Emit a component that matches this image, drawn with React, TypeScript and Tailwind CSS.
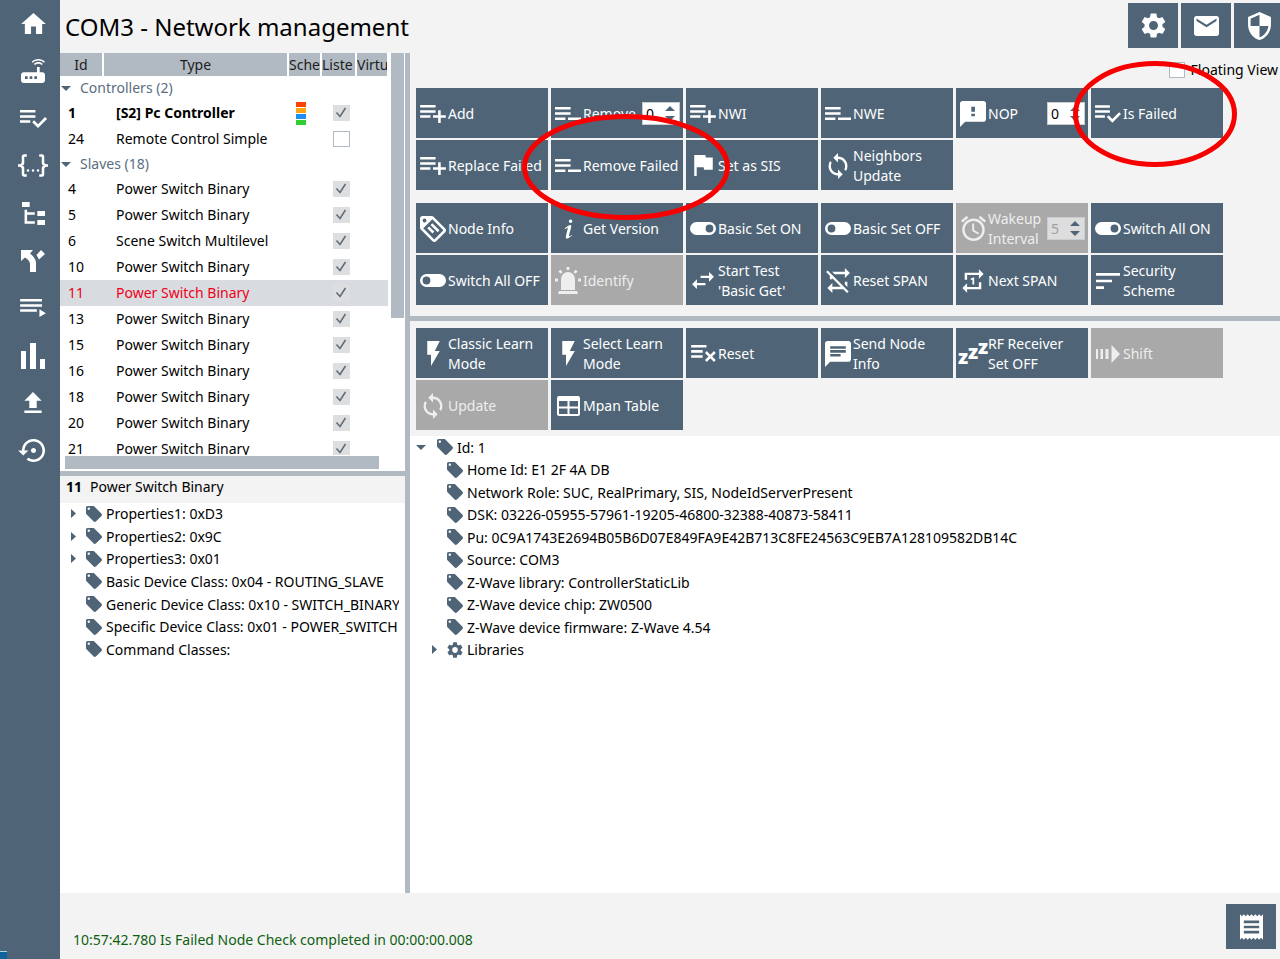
import React from "react";
import clsx from "clsx";
import {
  MdAlarm,
  MdChat,
  MdEmail,
  MdFlag,
  MdFlashOn,
  MdHome,
  MdLocalOffer,
  MdReceipt,
  MdRepeatOne,
  MdRouter,
  MdSecurity,
  MdSettings,
  MdSettingsBackupRestore,
  MdSort,
  MdSync,
} from "react-icons/md";

interface GlyphProps {
  d: string;
  box: string;
  className: string;
}

const Glyph: React.FC<GlyphProps> = ({ d, box, className }) => (
  <svg viewBox={box} className={className} fill="currentColor" aria-hidden="true">
    <path fillRule="evenodd" d={d} />
  </svg>
);

const ListPlus = () => (
  <Glyph
    box="2 6 20 14"
    className="h-[18px] w-[26px]"
    d="M2,16H10V14H2M18,14V10H16V14H12V16H16V20H18V16H22V14M14,6H2V8H14M14,10H2V12H14V10Z"
  />
);
const ListMinus = () => (
  <Glyph
    box="2 6 20 10"
    className="h-[13px] w-[26px]"
    d="M2,16H10V14H2M12,14V16H22V14M14,6H2V8H14M14,10H2V12H14V10Z"
  />
);
const ListCheck = () => (
  <Glyph
    box="2 6 21 14"
    className="h-[18px] w-[27px]"
    d="M14,10H2V12H14V10M14,6H2V8H14V6M2,16H10V14H2V16M21.5,11.5L23,13L16,20L11.5,15.5L13,14L16,17L21.5,11.5Z"
  />
);
const ListRemove = () => (
  <Glyph
    box="2 6 19.3 13.3"
    className="h-[17px] w-[25px]"
    d="M2,6V8H14V6H2M2,10V12H11V10H2M14.17,10.76L12.76,12.17L15.59,15L12.76,17.83L14.17,19.24L17,16.41L19.83,19.24L21.24,17.83L18.41,15L21.24,12.17L19.83,10.76L17,13.59L14.17,10.76M2,14V16H11V14H2Z"
  />
);
const ToggleOn = () => (
  <Glyph
    box="2 7 20 10"
    className="h-[13px] w-[26px]"
    d="M17,7H7A5,5 0 0,0 2,12A5,5 0 0,0 7,17H17A5,5 0 0,0 22,12A5,5 0 0,0 17,7M17,15A3,3 0 0,1 14,12A3,3 0 0,1 17,9A3,3 0 0,1 20,12A3,3 0 0,1 17,15Z"
  />
);
const ToggleOff = () => (
  <Glyph
    box="2 7 20 10"
    className="h-[13px] w-[26px]"
    d="M17,7H7A5,5 0 0,0 2,12A5,5 0 0,0 7,17H17A5,5 0 0,0 22,12A5,5 0 0,0 17,7M7,15A3,3 0 0,1 4,12A3,3 0 0,1 7,9A3,3 0 0,1 10,12A3,3 0 0,1 7,15Z"
  />
);
const TagText = () => (
  <Glyph
    box="2 2 20 20"
    className="h-[26px] w-[26px]"
    d="M5.5,7A1.5,1.5 0 0,0 7,5.5A1.5,1.5 0 0,0 5.5,4A1.5,1.5 0 0,0 4,5.5A1.5,1.5 0 0,0 5.5,7M21.41,11.58C21.77,11.94 22,12.44 22,13C22,13.55 21.78,14.05 21.41,14.41L14.41,21.41C14.05,21.77 13.55,22 13,22C12.45,22 11.95,21.77 11.58,21.41L2.59,12.41C2.22,12.05 2,11.55 2,11V4C2,2.89 2.89,2 4,2H11C11.55,2 12.05,2.22 12.41,2.58L21.41,11.58M13,20L20,13L11.5,4.5L4.5,11.5L13,20M10.09,8.91L11.5,7.5L17,13L15.59,14.41L10.09,8.91M7.59,11.41L9,10L13,14L11.59,15.41L7.59,11.41Z"
  />
);
const InfoMark = () => (
  <Glyph
    box="8 4 7.5 16"
    className="h-5 w-[9px]"
    d="M13.5,4A1.5,1.5 0 0,0 12,5.5A1.5,1.5 0 0,0 13.5,7A1.5,1.5 0 0,0 15,5.5A1.5,1.5 0 0,0 13.5,4M13.14,8.77C11.95,8.87 8.7,11.46 8.7,11.46C8.5,11.61 8.56,11.6 8.72,11.88C8.88,12.15 8.86,12.17 9.05,12.04C9.25,11.91 9.58,11.7 10.13,11.36C12.25,10 10.47,13.14 9.56,18.43C9.2,21.05 11.56,19.7 12.17,19.3C12.77,18.91 14.38,17.8 14.54,17.69C14.76,17.54 14.6,17.42 14.43,17.17C14.31,17 14.19,17.12 14.19,17.12C13.54,17.55 12.35,18.45 12.19,17.88C12,17.31 13.22,13.4 13.89,10.71C14,10.07 14.3,8.67 13.14,8.77Z"
  />
);
const Notice = () => (
  <Glyph
    box="2 2 20 20"
    className="size-[26px]"
    d="M20 2H4C2.9 2 2 2.9 2 4V22L6 18H20C21.1 18 22 17.1 22 16V4C22 2.900 21.1 2 20 2ZM13.500 10.200H10.700V6.500H13.500ZM13.500 13.800H10.700V11.800H13.500Z"
  />
);
const Swap = () => (
  <Glyph
    box="3 5 18 14"
    className="h-[17px] w-[22px]"
    d="M21,9L17,5V8H10V10H17V13M7,11L3,15L7,19V16H14V14H7V11Z"
  />
);
const RepeatOff = () => (
  <Glyph
    box="2 2 19 20"
    className="h-[25px] w-6"
    d="M2,5.27L3.28,4L20,20.72L18.73,22L15.73,19H7V22L3,18L7,14V17H13.73L7,10.27V11H5V8.27L2,5.27M17,13H19V17.18L17,15.18V13M17,5V2L21,6L17,10V7H8.82L6.82,5H17Z"
  />
);
const Siren = () => (
  <svg viewBox="0 0 26 27" className="h-[27px] w-[26px]" fill="currentColor" aria-hidden="true">
    <path d="M6 23V12a7 7 0 0 1 14 0v11zM4 24h18l1 3H3z" />
    <path
      d="M13 0v3M4.500 3.500l2 2.500M21.500 3.500l-2 2.500M0 13h3M23 13h3"
      stroke="currentColor"
      strokeWidth="2.8"
      fill="none"
    />
  </svg>
);
const Snooze = () => (
  <svg viewBox="0 0 32 40" className="h-10 w-8 shrink-0" fill="currentColor" aria-hidden="true">
    <g fontFamily="Noto Sans, sans-serif" fontWeight="900" fontSize="20">
      <text x="1" y="30">z</text>
      <text x="11" y="25">z</text>
      <text x="21" y="20">z</text>
    </g>
  </svg>
);
const ShiftArrow = () => (
  <Glyph
    box="0 0 24 18"
    className="h-[18px] w-6"
    d="M0 4H2V14H0ZM4.500 4H7V14H4.500ZM9.500 4H12.500V14H9.500ZM15.500 0L24 9L15.500 18Z"
  />
);
const TableGrid = () => (
  <Glyph
    box="0 0 23 20"
    className="h-5 w-[23px]"
    d="M2 0H21A2 2 0 0 1 23 2V18A2 2 0 0 1 21 20H2A2 2 0 0 1 0 18V2A2 2 0 0 1 2 0ZM2 5V10.500H10.500V5ZM12.500 5V10.500H21V5ZM2 12.500V18H10.500V12.500ZM12.500 12.500V18H21V12.500Z"
  />
);

const RED_RING = "pointer-events-none absolute z-10 fill-none stroke-[#f60000]";

interface TileData {
  label: string;
  icon: React.ReactNode;
  disabled?: boolean;
  value?: number;
  ring?: React.ReactNode;
}

const networkTiles: TileData[] = [
  { label: "Add", icon: <ListPlus /> },
  { label: "Remove", icon: <ListMinus />, value: 0 },
  { label: "NWI", icon: <ListPlus /> },
  { label: "NWE", icon: <ListMinus /> },
  { label: "NOP", icon: <Notice />, value: 0 },
  {
    label: "Is Failed",
    icon: <ListCheck />,
    ring: (
      <svg viewBox="0 0 164 106" className={clsx(RED_RING, "-top-[27px] -left-[18px] h-[106px] w-[164px]")}>
        <ellipse cx="82" cy="53" rx="79.5" ry="50.5" strokeWidth="5" />
      </svg>
    ),
  },
  { label: "Replace Failed", icon: <ListPlus /> },
  {
    label: "Remove Failed",
    icon: <ListMinus />,
    ring: (
      <svg viewBox="0 0 208 106" className={clsx(RED_RING, "-top-[26px] -left-[29px] h-[106px] w-[208px]")}>
        <ellipse cx="104" cy="53" rx="101.5" ry="50.5" strokeWidth="5" />
      </svg>
    ),
  },
  { label: "Set as SIS", icon: <MdFlag viewBox="5 4 15 17" className="h-[21px] w-[19px]" /> },
  { label: "Neighbors\nUpdate", icon: <MdSync viewBox="4 1 16 22" className="h-[26px] w-5" /> },
];

const nodeTiles: TileData[] = [
  { label: "Node Info", icon: <TagText /> },
  { label: "Get Version", icon: <InfoMark /> },
  { label: "Basic Set ON", icon: <ToggleOn /> },
  { label: "Basic Set OFF", icon: <ToggleOff /> },
  {
    label: "Wakeup\nInterval",
    icon: <MdAlarm viewBox="2 2 20 20" className="size-[25px]" />,
    value: 5,
    disabled: true,
  },
  { label: "Switch All ON", icon: <ToggleOn /> },
  { label: "Switch All OFF", icon: <ToggleOff /> },
  { label: "Identify", icon: <Siren />, disabled: true },
  { label: "Start Test\n'Basic Get'", icon: <Swap /> },
  { label: "Reset SPAN", icon: <RepeatOff /> },
  { label: "Next SPAN", icon: <MdRepeatOne viewBox="3 1 18 22" className="h-[26px] w-[22px]" /> },
  { label: "Security\nScheme", icon: <MdSort viewBox="3 6 18 12" className="h-4 w-6" /> },
];

const controllerTiles: TileData[] = [
  { label: "Classic Learn\nMode", icon: <MdFlashOn viewBox="7 2 10 20" className="h-[25px] w-[13px]" /> },
  { label: "Select Learn\nMode", icon: <MdFlashOn viewBox="7 2 10 20" className="h-[25px] w-[13px]" /> },
  { label: "Reset", icon: <ListRemove /> },
  { label: "Send Node\nInfo", icon: <MdChat viewBox="2 2 20 20" className="size-[26px]" /> },
  { label: "RF Receiver\nSet OFF", icon: <Snooze /> },
  { label: "Shift", icon: <ShiftArrow />, disabled: true },
  { label: "Update", icon: <MdSync viewBox="4 1 16 22" className="h-[26px] w-5" />, disabled: true },
  { label: "Mpan Table", icon: <TableGrid /> },
];

const Tile: React.FC<TileData> = ({ label, icon, disabled, value, ring }) => (
  <div
    className={clsx(
      "relative flex h-[50px] w-[132px] items-center",
      disabled ? "bg-[#a9a9a9] text-[#eeeeee]" : "bg-[#4f6577] text-white"
    )}
  >
    <button
      type="button"
      disabled={disabled}
      className="flex h-full min-w-0 flex-1 items-center gap-[2px] pt-px pl-1 text-left"
    >
      <span className="flex w-[26px] shrink-0 items-center justify-center">{icon}</span>
      <span className="leading-5 whitespace-pre">{label}</span>
    </button>
    {value !== undefined && (
      <span
        className={clsx(
          "mr-[3px] flex h-[23px] w-[38px] shrink-0 items-center border border-[#c8cdd2] pr-1",
          disabled ? "bg-[#dddddd] text-[#a0a0a0]" : "bg-white text-black"
        )}
      >
        <input
          type="text"
          inputMode="numeric"
          aria-label={label.replace("\n", " ") + " value"}
          defaultValue={value}
          disabled={disabled}
          className="w-0 min-w-0 flex-1 pl-[3px] outline-none"
        />
        <svg viewBox="0 0 10 15" className="h-[15px] w-[10px] fill-[#4f6577]" aria-hidden="true">
          <path d="M0 5L5 0L10 5ZM0 10L5 15L10 10Z" />
        </svg>
      </span>
    )}
    {ring}
  </div>
);

const TileGroup = ({ tiles }: { tiles: TileData[] }) => (
  <div className="flex flex-wrap gap-x-[3px] gap-y-[2px]">
    {tiles.map((tile) => (
      <Tile key={tile.label} {...tile} />
    ))}
  </div>
);

const menu = [
  { name: "Home", icon: <MdHome viewBox="2 3 20 17" className="h-[21px] w-[25px]" /> },
  { name: "Network", icon: <MdRouter viewBox="3 3 18 18" className="size-6" /> },
  { name: "Node check", icon: <ListCheck /> },
  {
    name: "Command classes",
    icon: (
      <Glyph
        box="0 3 24 18"
        className="h-[23px] w-[30px]"
        d="M5,3H7V5H5V10A2,2 0 0,1 3,12A2,2 0 0,1 5,14V19H7V21H5C3.93,20.73 3,20.1 3,19V15A2,2 0 0,0 1,13H0V11H1A2,2 0 0,0 3,9V5A2,2 0 0,1 5,3M19,3A2,2 0 0,1 21,5V9A2,2 0 0,0 23,11H24V13H23A2,2 0 0,0 21,15V19A2,2 0 0,1 19,21H17V19H19V14A2,2 0 0,1 21,12A2,2 0 0,1 19,10V5H17V3H19M12,15A1,1 0 0,1 13,16A1,1 0 0,1 12,17A1,1 0 0,1 11,16A1,1 0 0,1 12,15M8,15A1,1 0 0,1 9,16A1,1 0 0,1 8,17A1,1 0 0,1 7,16A1,1 0 0,1 8,15M16,15A1,1 0 0,1 17,16A1,1 0 0,1 16,17A1,1 0 0,1 15,16A1,1 0 0,1 16,15Z"
      />
    ),
  },
  {
    name: "Topology",
    icon: (
      <Glyph
        box="3 3 18 18"
        className="size-[23px]"
        d="M3,3H9V7H3V3M15,10H21V14H15V10M15,17H21V21H15V17M13,13H7V18H13V20H7L5,20V9H7V11H13V13Z"
      />
    ),
  },
  {
    name: "Routes",
    icon: (
      <Glyph
        box="0 0 24 22"
        className="h-[22px] w-6"
        d="M0 0H12L9 3.500C12.500 6.500 15 9 15 13V22H9V14C9 11.500 7 9.500 4 7.500L0 11ZM20 0L24 4L18 9.500L15.500 5Z"
      />
    ),
  },
  {
    name: "Queue",
    icon: (
      <Glyph
        box="2 5 20 14"
        className="h-[18px] w-[26px]"
        d="M19,9H2V11H19V9M19,5H2V7H19V5M2,15H15V13H2V15M17,13V19L22,16L17,13Z"
      />
    ),
  },
  {
    name: "Statistics",
    icon: <Glyph box="0 0 24 26" className="h-[26px] w-6" d="M0 8H5V26H0ZM9 0H15V26H9ZM19 16H24V26H19Z" />,
  },
  {
    name: "Upload",
    icon: <Glyph box="5 3 14 17" className="h-[21px] w-[18px]" d="M9 16h6v-6h4l-7-7-7 7h4zm-4 2h14v2H5z" />,
  },
  { name: "Restore", icon: <MdSettingsBackupRestore viewBox="0 3 24 18" className="h-[23px] w-[31px]" /> },
];

interface NodeRow {
  id: number;
  type: string;
  listening?: boolean;
  secure?: boolean;
}

const controllers: NodeRow[] = [
  { id: 1, type: "[S2] Pc Controller", listening: true, secure: true },
  { id: 24, type: "Remote Control Simple", listening: false },
];

const slaves: NodeRow[] = [
  { id: 4, type: "Power Switch Binary" },
  { id: 5, type: "Power Switch Binary" },
  { id: 6, type: "Scene Switch Multilevel" },
  { id: 10, type: "Power Switch Binary" },
  { id: 11, type: "Power Switch Binary" },
  { id: 13, type: "Power Switch Binary" },
  { id: 15, type: "Power Switch Binary" },
  { id: 16, type: "Power Switch Binary" },
  { id: 18, type: "Power Switch Binary" },
  { id: 20, type: "Power Switch Binary" },
  { id: 21, type: "Power Switch Binary" },
];

const CaretDown = ({ className }: { className?: string }) => (
  <svg viewBox="0 0 10 5" className={clsx("h-[5px] w-[10px] shrink-0 fill-[#4f6577]", className)} aria-hidden="true">
    <path d="M0 0H10L5 5Z" />
  </svg>
);

const CaretRight = () => (
  <svg viewBox="0 0 5 9" className="ml-px h-[9px] w-[5px] fill-[#4f6577]" aria-hidden="true">
    <path d="M0 0L5 4.500L0 9Z" />
  </svg>
);

const GroupRow = ({ title }: { title: string }) => (
  <tr className="h-6">
    <td colSpan={5}>
      <button type="button" className="flex items-center gap-[9px] pl-px leading-5 text-[#5a6e7f]">
        <CaretDown />
        {title}
      </button>
    </td>
  </tr>
);

const DeviceRow = ({ id, type, listening = true, secure }: NodeRow) => (
  <tr className={clsx("h-[26px]", secure && "font-bold", id === 11 && "bg-[#d8dce0] text-[#f00018]")}>
    <td className="pl-2">{id}</td>
    <td className="pl-[13px] whitespace-nowrap">{type}</td>
    <td className="pl-2">
      {secure && (
        <div className="flex w-[10px] flex-col gap-px">
          <span className="h-[5px] bg-[#ff4500]" />
          <span className="h-[5px] bg-[#ffa510]" />
          <span className="h-[5px] bg-[#1e90ee]" />
          <span className="h-[5px] bg-[#32cd32]" />
        </div>
      )}
    </td>
    <td className="pl-3">
      <span className="grid h-4 w-[17px]">
        <input
          type="checkbox"
          aria-label={`Node ${id} listening`}
          defaultChecked={listening}
          className="peer col-start-1 row-start-1 appearance-none border border-[#b1bac2] bg-white checked:border-[#dcdee0] checked:bg-[#dcdee0]"
        />
        <svg
          viewBox="0 0 17 16"
          className="pointer-events-none invisible col-start-1 row-start-1 fill-none stroke-[#5f6b75] peer-checked:visible"
          aria-hidden="true"
        >
          <path d="M3.500 7.500L7 11.500L12.500 3" strokeWidth="1.5" />
        </svg>
      </span>
    </td>
    <td />
  </tr>
);

interface TreeItemProps {
  text: string;
  caret?: boolean;
  icon?: React.ReactNode;
}

const Tag = () => <MdLocalOffer viewBox="2 2 20 20" className="size-4" />;

const TreeItem: React.FC<TreeItemProps> = ({ text, caret, icon }) => (
  <li className="flex items-center whitespace-nowrap">
    <span className="w-4 shrink-0">{caret && <CaretRight />}</span>
    <span className="mr-1 shrink-0 text-[#4f6577]">{icon ?? <Tag />}</span>
    {text}
  </li>
);

const properties: TreeItemProps[] = [
  { text: "Properties1: 0xD3", caret: true },
  { text: "Properties2: 0x9C", caret: true },
  { text: "Properties3: 0x01", caret: true },
  { text: "Basic Device Class: 0x04 - ROUTING_SLAVE" },
  { text: "Generic Device Class: 0x10 - SWITCH_BINARY" },
  { text: "Specific Device Class: 0x01 - POWER_SWITCH" },
  { text: "Command Classes:" },
];

const controllerInfo: TreeItemProps[] = [
  { text: "Home Id: E1 2F 4A DB" },
  { text: "Network Role: SUC, RealPrimary, SIS, NodeIdServerPresent" },
  { text: "DSK: 03226-05955-57961-19205-46800-32388-40873-58411" },
  { text: "Pu: 0C9A1743E2694B05B6D07E849FA9E42B713C8FE24563C9EB7A128109582DB14C" },
  { text: "Source: COM3" },
  { text: "Z-Wave library: ControllerStaticLib" },
  { text: "Z-Wave device chip: ZW0500" },
  { text: "Z-Wave device firmware: Z-Wave 4.54" },
  { text: "Libraries", caret: true, icon: <MdSettings viewBox="2 2 20 20" className="size-4" /> },
];

const HEAD_CELL =
  "overflow-hidden border-r-2 border-white bg-[#b1bac2] pt-px font-normal whitespace-nowrap text-[#1c1c1c]";
const SQUARE_BUTTON = "flex h-[45px] w-[50px] shrink-0 items-center justify-center bg-[#4f6577] text-white";

const App: React.FC = () => {
  return (
    <div className="flex h-screen overflow-hidden bg-[#f3f3f3] font-['Noto_Sans','Open_Sans',sans-serif] text-[14px] text-black">
      <nav className="flex w-[60px] shrink-0 flex-col justify-between bg-[#4f6577] text-white">
        <div className="flex h-[474px] flex-col">
          {menu.map((item) => (
            <button
              key={item.name}
              type="button"
              aria-label={item.name}
              className="flex flex-1 items-center justify-center pl-[6px]"
            >
              {item.icon}
            </button>
          ))}
        </div>
        <span className="h-2 w-[7px] border-t border-[#a8d4ea] bg-[#0d639b]" />
      </nav>

      <div className="flex min-w-0 flex-1 flex-col">
        <header className="flex h-[53px] shrink-0 justify-between pt-[3px] pl-[5px]">
          <h1 className="text-2xl leading-[48px]">COM3 - Network management</h1>
          <div className="-mr-1 flex gap-[3px]">
            <button type="button" aria-label="Settings" className={SQUARE_BUTTON}>
              <MdSettings viewBox="2 2 20 20" className="size-[25px]" />
            </button>
            <button type="button" aria-label="Mail" className={SQUARE_BUTTON}>
              <MdEmail viewBox="2 4 20 16" className="h-5 w-[25px]" />
            </button>
            <button type="button" aria-label="Security" className={SQUARE_BUTTON}>
              <MdSecurity viewBox="3 1 18 22" className="h-7 w-[23px]" />
            </button>
          </div>
        </header>

        <main className="flex min-h-0 flex-1">
          <section className="flex w-[350px] shrink-0 flex-col border-r-[5px] border-[#b1bac2] bg-white">
            {/* node list */}
            <div className="flex min-h-0 flex-1 flex-col">
              <div className="flex min-h-0 flex-1 gap-[2px]">
                <div className="min-w-0 flex-1 overflow-hidden">
                  <table className="w-full table-fixed border-collapse leading-5">
                    <colgroup>
                      <col className="w-[43px]" />
                      <col />
                      <col className="w-[33px]" />
                      <col className="w-[35px]" />
                      <col className="w-8" />
                    </colgroup>
                    <thead>
                      <tr className="h-[23px]">
                        <th className={HEAD_CELL}>Id</th>
                        <th className={HEAD_CELL}>Type</th>
                        <th className={clsx(HEAD_CELL, "text-left")}>Sche</th>
                        <th className={clsx(HEAD_CELL, "text-left")}>Liste</th>
                        <th className={clsx(HEAD_CELL, "text-left")}>Virtu</th>
                      </tr>
                    </thead>
                    <tbody>
                      <GroupRow title="Controllers (2)" />
                      {controllers.map((node) => (
                        <DeviceRow key={node.id} {...node} />
                      ))}
                      <GroupRow title="Slaves (18)" />
                      {slaves.map((node) => (
                        <DeviceRow key={node.id} {...node} />
                      ))}
                    </tbody>
                  </table>
                </div>
                <div className="mr-px w-[13px]">
                  <div className="h-[66%] bg-[#b1bac2]" />
                </div>
              </div>
              <div className="mt-px mr-[26px] mb-[2px] ml-[5px] h-[13px] bg-[#b1bac2]" />
            </div>

            {/* selected node */}
            <div className="flex min-h-0 flex-1 flex-col border-t-[5px] border-[#b1bac2]">
              <h2 className="bg-[#f3f3f3] pt-px pb-[6px] pl-[6px] leading-5">
                <b className="mr-2">11</b>Power Switch Binary
              </h2>
              <ul className="mr-[6px] grid h-[158px] auto-rows-fr overflow-hidden pl-[10px]">
                {properties.map((item) => (
                  <TreeItem key={item.text} {...item} />
                ))}
              </ul>
            </div>
          </section>

          <section className="flex min-w-0 flex-1 flex-col">
            <div className="flex flex-col gap-[13px] pb-[11px] pl-[6px]">
              <label className="-mb-[6px] flex items-center justify-end gap-[6px] pt-[6px] pr-[2px] pb-px leading-[21px]">
                <input type="checkbox" className="size-4 appearance-none border border-[#b1bac2] bg-white" />
                Floating View
              </label>
              <TileGroup tiles={networkTiles} />
              <TileGroup tiles={nodeTiles} />
            </div>
            <div className="border-t-[5px] border-[#b1bac2] pt-[7px] pb-[6px] pl-[6px]">
              <TileGroup tiles={controllerTiles} />
            </div>
            <div className="min-h-0 flex-1 bg-white">
              <ul className="grid h-[225px] auto-rows-fr pl-[6px]">
                <li className="flex items-center">
                  <CaretDown className="mr-[11px]" />
                  <span className="mr-1 text-[#4f6577]">
                    <Tag />
                  </span>
                  Id: 1
                </li>
                {controllerInfo.map((item) => (
                  <div key={item.text} className="contents [&>li]:pl-[15px]">
                    <TreeItem {...item} />
                  </div>
                ))}
              </ul>
            </div>
          </section>
        </main>

        <footer className="flex h-[66px] shrink-0 items-start justify-between pt-[11px] pr-1 pl-[13px]">
          <p className="pt-[26px] leading-5 text-[#0f5f12]">
            10:57:42.780 Is Failed Node Check completed in 00:00:00.008
          </p>
          <button type="button" aria-label="Log" className={SQUARE_BUTTON}>
            <MdReceipt viewBox="3 2 18 20" className="h-[26px] w-[23px]" />
          </button>
        </footer>
      </div>
    </div>
  );
};

export default App;
